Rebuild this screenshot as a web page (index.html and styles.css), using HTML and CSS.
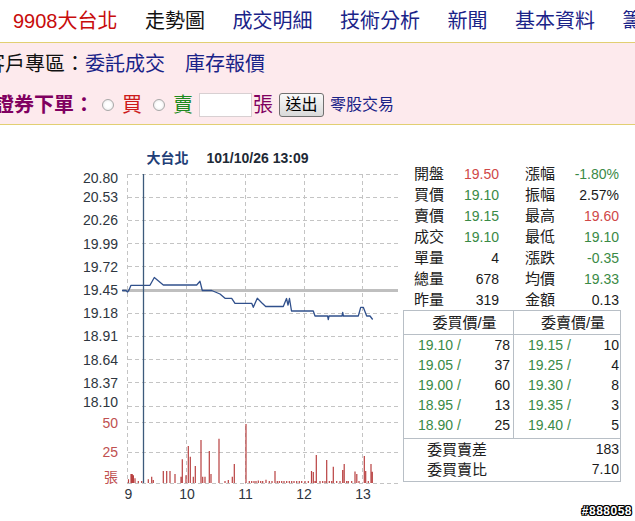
FILE: index.html
```html
<!DOCTYPE html>
<html lang="zh-Hant">
<head>
<meta charset="utf-8">
<title>9908大台北 走勢圖</title>
<link rel="stylesheet" href="styles.css">
</head>
<body>
<div class="nav">
  <span class="brand">9908大台北</span>
  <span class="cur">走勢圖</span>
  <a href="#">成交明細</a>
  <a href="#">技術分析</a>
  <a href="#">新聞</a>
  <a href="#">基本資料</a>
  <a href="#">籌碼分析</a>
</div>
<div class="panel">
  <div class="row1">
    <span class="zone">客戶專區：</span>
    <a href="#">委託成交</a>
    <a href="#" class="sep">庫存報價</a>
  </div>
  <div class="row2">
    <span class="order">證券下單：</span>
    <span class="radio r1"></span><span class="buy">買</span>
    <span class="radio r2"></span><span class="sell">賣</span>
    <span class="qty"></span><span class="unit">張</span>
    <span class="btn">送出</span>
    <a href="#" class="odd">零股交易</a>
  </div>
</div>
<div class="main">
  <svg class="chart" width="400" height="396" viewBox="0 125 400 396" xmlns="http://www.w3.org/2000/svg">
    <text x="146.5" y="163" class="ttl1">大台北</text>
    <text x="206.5" y="163" class="ttl2">101/10/26 13:09</text>
    <g class="grid">
      <path d="M128 174.5H398M128 197.5H398M128 220.5H398M128 243.5H398M128 266.5H398M128 313.5H398M128 336.5H398M128 359.5H398M128 382.5H398M128 406.5H398M128 422.5H398M128 452.5H398M128 483.5H398"/>
      <path d="M127.5 174V484M186.5 174V484M245.5 174V484M304.5 174V484M362.5 174V484"/>
    </g>
    <path class="ref" d="M122.5 290.5H398"/>
    <polyline class="price" points="122,290.5 126,290.5 127.5,292 129,290 131,285.3 150,285.3 154.3,277.5 163.3,285 196.7,285 200,281.3 202.3,290.5 211.7,290.5 220,294 225,298.3 231.7,298.3 235,303.3 251.7,303.3 253.3,307.3 257.3,298.3 261.7,302.7 265.7,306.5 283.3,306.5 286.5,298.5 288,305 289.5,298.5 291.5,311 313.3,311 315,316 327.6,316 328.3,319.5 329,316 342,316 342.7,312.5 343.4,316 358.3,316 360.7,307.3 363.3,307.3 366.7,316 370,316 372.7,319.5"/>
    <path class="vol" d="M128.5 483V479.3M131 483V474M132.2 483V474M133.4 483V475.3M135 483V478.3M138.3 483V481M141.7 483V481M148.3 483V479.3M151.7 483V476.7M153.3 483V480M163.3 483V471M166.7 483V471M170 483V471M175 483V474M181 483V476.7M182.3 483V459.3M186 483V475.3M188.3 483V446M190.3 483V456.7M193.3 483V476.7M195.3 483V466M201 483V440M202.7 483V476.7M205 483V476.7M209.3 483V451M211 483V474M219 483V438.7M225 483V481M228.3 483V480M232.3 483V476.7M234.3 483V464M246 483V424M249.3 483V481M251.7 483V481M254 483V481M256 483V481M258.3 483V480.5M260.7 483V481M262.7 483V481M266 483V479.7M269.3 483V481M272 483V481M275 483V471M277.3 483V481M279.3 483V481M281.7 483V481M284 483V481M286.7 483V481M289.3 483V481M291.7 483V481M294 483V481M296.7 483V481M299.3 483V481M301.7 483V481M305 483V481M308.3 483V481M311.5 483V471M313.3 483V472M315 483V481M316.3 483V455M320 483V481M322.7 483V481M325 483V481M326.7 483V460M329.3 483V481M331.7 483V481M333.3 483V466.7M336.7 483V481M340 483V481M342.7 483V470M344.2 483V464M346.7 483V481M348.3 483V481M351.7 483V481M355 483V471.5M356.8 483V474M359 483V481M364.3 483V456M365.7 483V471M368.3 483V481M371 483V464M372.3 483V471.7"/>
    <path class="cursor" d="M143.5 174V483"/>
    <g class="ylab">
      <text x="118" y="183">20.80</text>
      <text x="118" y="202.2">20.53</text>
      <text x="118" y="225.4">20.26</text>
      <text x="118" y="248.6">19.99</text>
      <text x="118" y="271.8">19.72</text>
      <text x="118" y="295">19.45</text>
      <text x="118" y="318.2">19.18</text>
      <text x="118" y="341.4">18.91</text>
      <text x="118" y="364.6">18.64</text>
      <text x="118" y="387.8">18.37</text>
      <text x="118" y="407">18.10</text>
    </g>
    <g class="vlab">
      <text x="118" y="428">50</text>
      <text x="118" y="457">25</text>
      <text x="118" y="482">張</text>
    </g>
    <g class="xlab">
      <text x="128.5" y="499">9</text>
      <text x="187" y="499">10</text>
      <text x="245.5" y="499">11</text>
      <text x="304" y="499">12</text>
      <text x="363" y="499">13</text>
    </g>
  </svg>
  <div class="info">
    <div class="stats">
      <span class="lbl">開盤</span><span class="val red">19.50</span><span class="lbl l2">漲幅</span><span class="val grn">-1.80%</span>
      <span class="lbl">買價</span><span class="val grn">19.10</span><span class="lbl l2">振幅</span><span class="val">2.57%</span>
      <span class="lbl">賣價</span><span class="val grn">19.15</span><span class="lbl l2">最高</span><span class="val red">19.60</span>
      <span class="lbl">成交</span><span class="val grn">19.10</span><span class="lbl l2">最低</span><span class="val grn">19.10</span>
      <span class="lbl">單量</span><span class="val">4</span><span class="lbl l2">漲跌</span><span class="val grn">-0.35</span>
      <span class="lbl">總量</span><span class="val">678</span><span class="lbl l2">均價</span><span class="val grn">19.33</span>
      <span class="lbl">昨量</span><span class="val">319</span><span class="lbl l2">金額</span><span class="val">0.13</span>
    </div>
    <div class="book">
      <div class="bhead">
        <div class="hl">委買價/量</div>
        <div class="hr">委賣價/量</div>
      </div>
      <div class="bbody">
        <div class="side left">
          <div class="line"><span class="p">19.10 /</span><span class="q">78</span></div>
          <div class="line"><span class="p">19.05 /</span><span class="q">37</span></div>
          <div class="line"><span class="p">19.00 /</span><span class="q">60</span></div>
          <div class="line"><span class="p">18.95 /</span><span class="q">13</span></div>
          <div class="line"><span class="p">18.90 /</span><span class="q">25</span></div>
        </div>
        <div class="side right">
          <div class="line"><span class="p">19.15 /</span><span class="q">10</span></div>
          <div class="line"><span class="p">19.25 /</span><span class="q">4</span></div>
          <div class="line"><span class="p">19.30 /</span><span class="q">8</span></div>
          <div class="line"><span class="p">19.35 /</span><span class="q">3</span></div>
          <div class="line"><span class="p">19.40 /</span><span class="q">5</span></div>
        </div>
      </div>
      <div class="bsum">
        <div class="sline"><span class="slbl">委買賣差</span><span class="q">183</span></div>
        <div class="sline"><span class="slbl">委買賣比</span><span class="q">7.10</span></div>
      </div>
    </div>
    <div class="wm">#888058</div>
  </div>
</div>
</body>
</html>
```

FILE: styles.css
```css
html, body {
  margin: 0;
  padding: 0;
}
body {
  width: 635px;
  height: 521px;
  overflow: hidden;
  background: #ffffff;
  font-family: "Liberation Sans", "Noto Sans CJK TC", sans-serif;
  color: #111;
}
a {
  text-decoration: none;
}

/* top navigation */
.nav {
  display: flex;
  align-items: center;
  gap: 27.5px;
  height: 42px;
  padding-left: 13px;
  font-size: 20px;
  line-height: 1;
  white-space: nowrap;
  overflow: hidden;
  border-bottom: 1px solid #e2cf72;
}
.nav .brand {
  color: #c80c0c;
}
.nav .cur {
  color: #111111;
}
.nav a {
  color: #1a2388;
  flex: none;
}

/* pink panel */
.panel {
  height: 81px;
  background: #fdeaed;
  border-bottom: 1px solid #e2cf72;
  overflow: hidden;
}
.row1 {
  height: 42px;
  display: flex;
  align-items: center;
  margin-left: -15px;
  font-size: 20px;
  line-height: 1;
  white-space: nowrap;
}
.row1 .zone {
  color: #111;
}
.row1 a {
  color: #1a2388;
}
.row1 .sep {
  margin-left: 20px;
}
.row2 {
  height: 39px;
  display: flex;
  align-items: center;
  margin-left: -6px;
  line-height: 1;
  white-space: nowrap;
}
.order {
  font-size: 20px;
  font-weight: bold;
  color: #800060;
  width: 100px;
}
.radio {
  width: 10px;
  height: 10px;
  border-radius: 50%;
  border: 1px solid #a8a8a8;
  background: radial-gradient(circle at 50% 50%, #ffffff 0 35%, #e4e4e4 100%);
  flex: none;
}
.r1 {
  margin-left: 8px;
  margin-right: 8px;
}
.r2 {
  margin-left: 11px;
  margin-right: 8px;
}
.buy {
  font-size: 20px;
  color: #cc1a1a;
}
.sell {
  font-size: 20px;
  color: #1f8a1f;
}
.qty {
  width: 51px;
  height: 22px;
  margin-left: 6px;
  background: #ffffff;
  border: 1px solid #d8d0d2;
}
.unit {
  font-size: 20px;
  color: #800060;
  margin-left: 1px;
}
.btn {
  margin-left: 6px;
  width: 43px;
  height: 22px;
  border: 1px solid #707070;
  border-radius: 3px;
  background: linear-gradient(#fafafa, #d9d9d9);
  font-size: 16px;
  color: #000;
  display: flex;
  align-items: center;
  justify-content: center;
}
.odd {
  margin-left: 6px;
  font-size: 16px;
  color: #1a2388;
}

/* main */
.main {
  display: flex;
}
.chart {
  display: block;
  flex: none;
}
.chart text {
  font-family: "Liberation Sans", "Noto Sans CJK TC", sans-serif;
  font-size: 14px;
}
.ttl1 {
  font-size: 15px;
  font-weight: bold;
  fill: #1f3f78;
}
.chart .ttl2 {
  font-weight: bold;
  fill: #1e2a36;
}
.grid path {
  fill: none;
  stroke: #c4c4c4;
  stroke-width: 1;
  stroke-dasharray: 4 3;
}
.ref {
  stroke: #bfbfbf;
  stroke-width: 3;
  fill: none;
}
.price {
  fill: none;
  stroke: #30508c;
  stroke-width: 1.3;
  stroke-linejoin: round;
}
.vol {
  stroke: #b84040;
  stroke-width: 1.2;
  fill: none;
}
.cursor {
  stroke: #3c5a7c;
  stroke-width: 1.3;
  fill: none;
}
.ylab text {
  text-anchor: end;
  fill: #2e3640;
}
.vlab text {
  text-anchor: end;
  fill: #c05050;
}
.xlab text {
  text-anchor: middle;
  fill: #2e3640;
}

/* info column */
.info {
  width: 235px;
  flex: none;
}
.stats {
  margin-top: 38px;
  padding-left: 14px;
  display: grid;
  grid-template-columns: 36px 49px 62px 58px;
  grid-auto-rows: 21px;
  align-items: center;
  font-size: 14px;
  line-height: 1;
  color: #1a1a1a;
}
.lbl {
  font-size: 15px;
  color: #202020;
}
.l2 {
  padding-left: 26px;
}
.val {
  text-align: right;
}
.red {
  color: #d04848;
}
.grn {
  color: #3a8a46;
}

.book {
  margin-left: 3px;
  width: 218px;
  box-sizing: border-box;
  border: 1px solid #b8bfc6;
  font-size: 14px;
  line-height: 1;
}
.bhead {
  display: flex;
  height: 23px;
  border-bottom: 1px solid #b8bfc6;
  font-size: 15px;
  color: #202020;
}
.hl, .hr {
  display: flex;
  align-items: center;
  justify-content: center;
  padding-left: 12px;
  box-sizing: border-box;
}
.hl {
  width: 110px;
  border-right: 1px solid #b8bfc6;
}
.hr {
  flex: 1;
}
.bbody {
  display: flex;
  border-bottom: 1px solid #b8bfc6;
}
.side {
  padding-bottom: 3px;
  box-sizing: border-box;
}
.left {
  width: 110px;
  border-right: 1px solid #b8bfc6;
  padding-left: 14px;
  padding-right: 3px;
}
.right {
  flex: 1;
  padding-left: 14px;
  padding-right: 1px;
}
.line, .sline {
  height: 20px;
  display: flex;
  align-items: center;
  justify-content: space-between;
}
.p {
  color: #3a8a46;
}
.q {
  color: #1a1a1a;
}
.bsum {
  padding: 0 1px 2px 23px;
}
.slbl {
  font-size: 15px;
  color: #202020;
}
.wm {
  margin-top: 23px;
  padding-right: 3px;
  text-align: right;
  font-size: 12px;
  font-weight: bold;
  line-height: 12px;
  color: #ffffff;
  letter-spacing: 0.5px;
  text-shadow: 1px 0 0 #000, -1px 0 0 #000, 0 1px 0 #000, 0 -1px 0 #000, 1px 1px 0 #000, -1px -1px 0 #000, 1px -1px 0 #000, -1px 1px 0 #000;
}
```
